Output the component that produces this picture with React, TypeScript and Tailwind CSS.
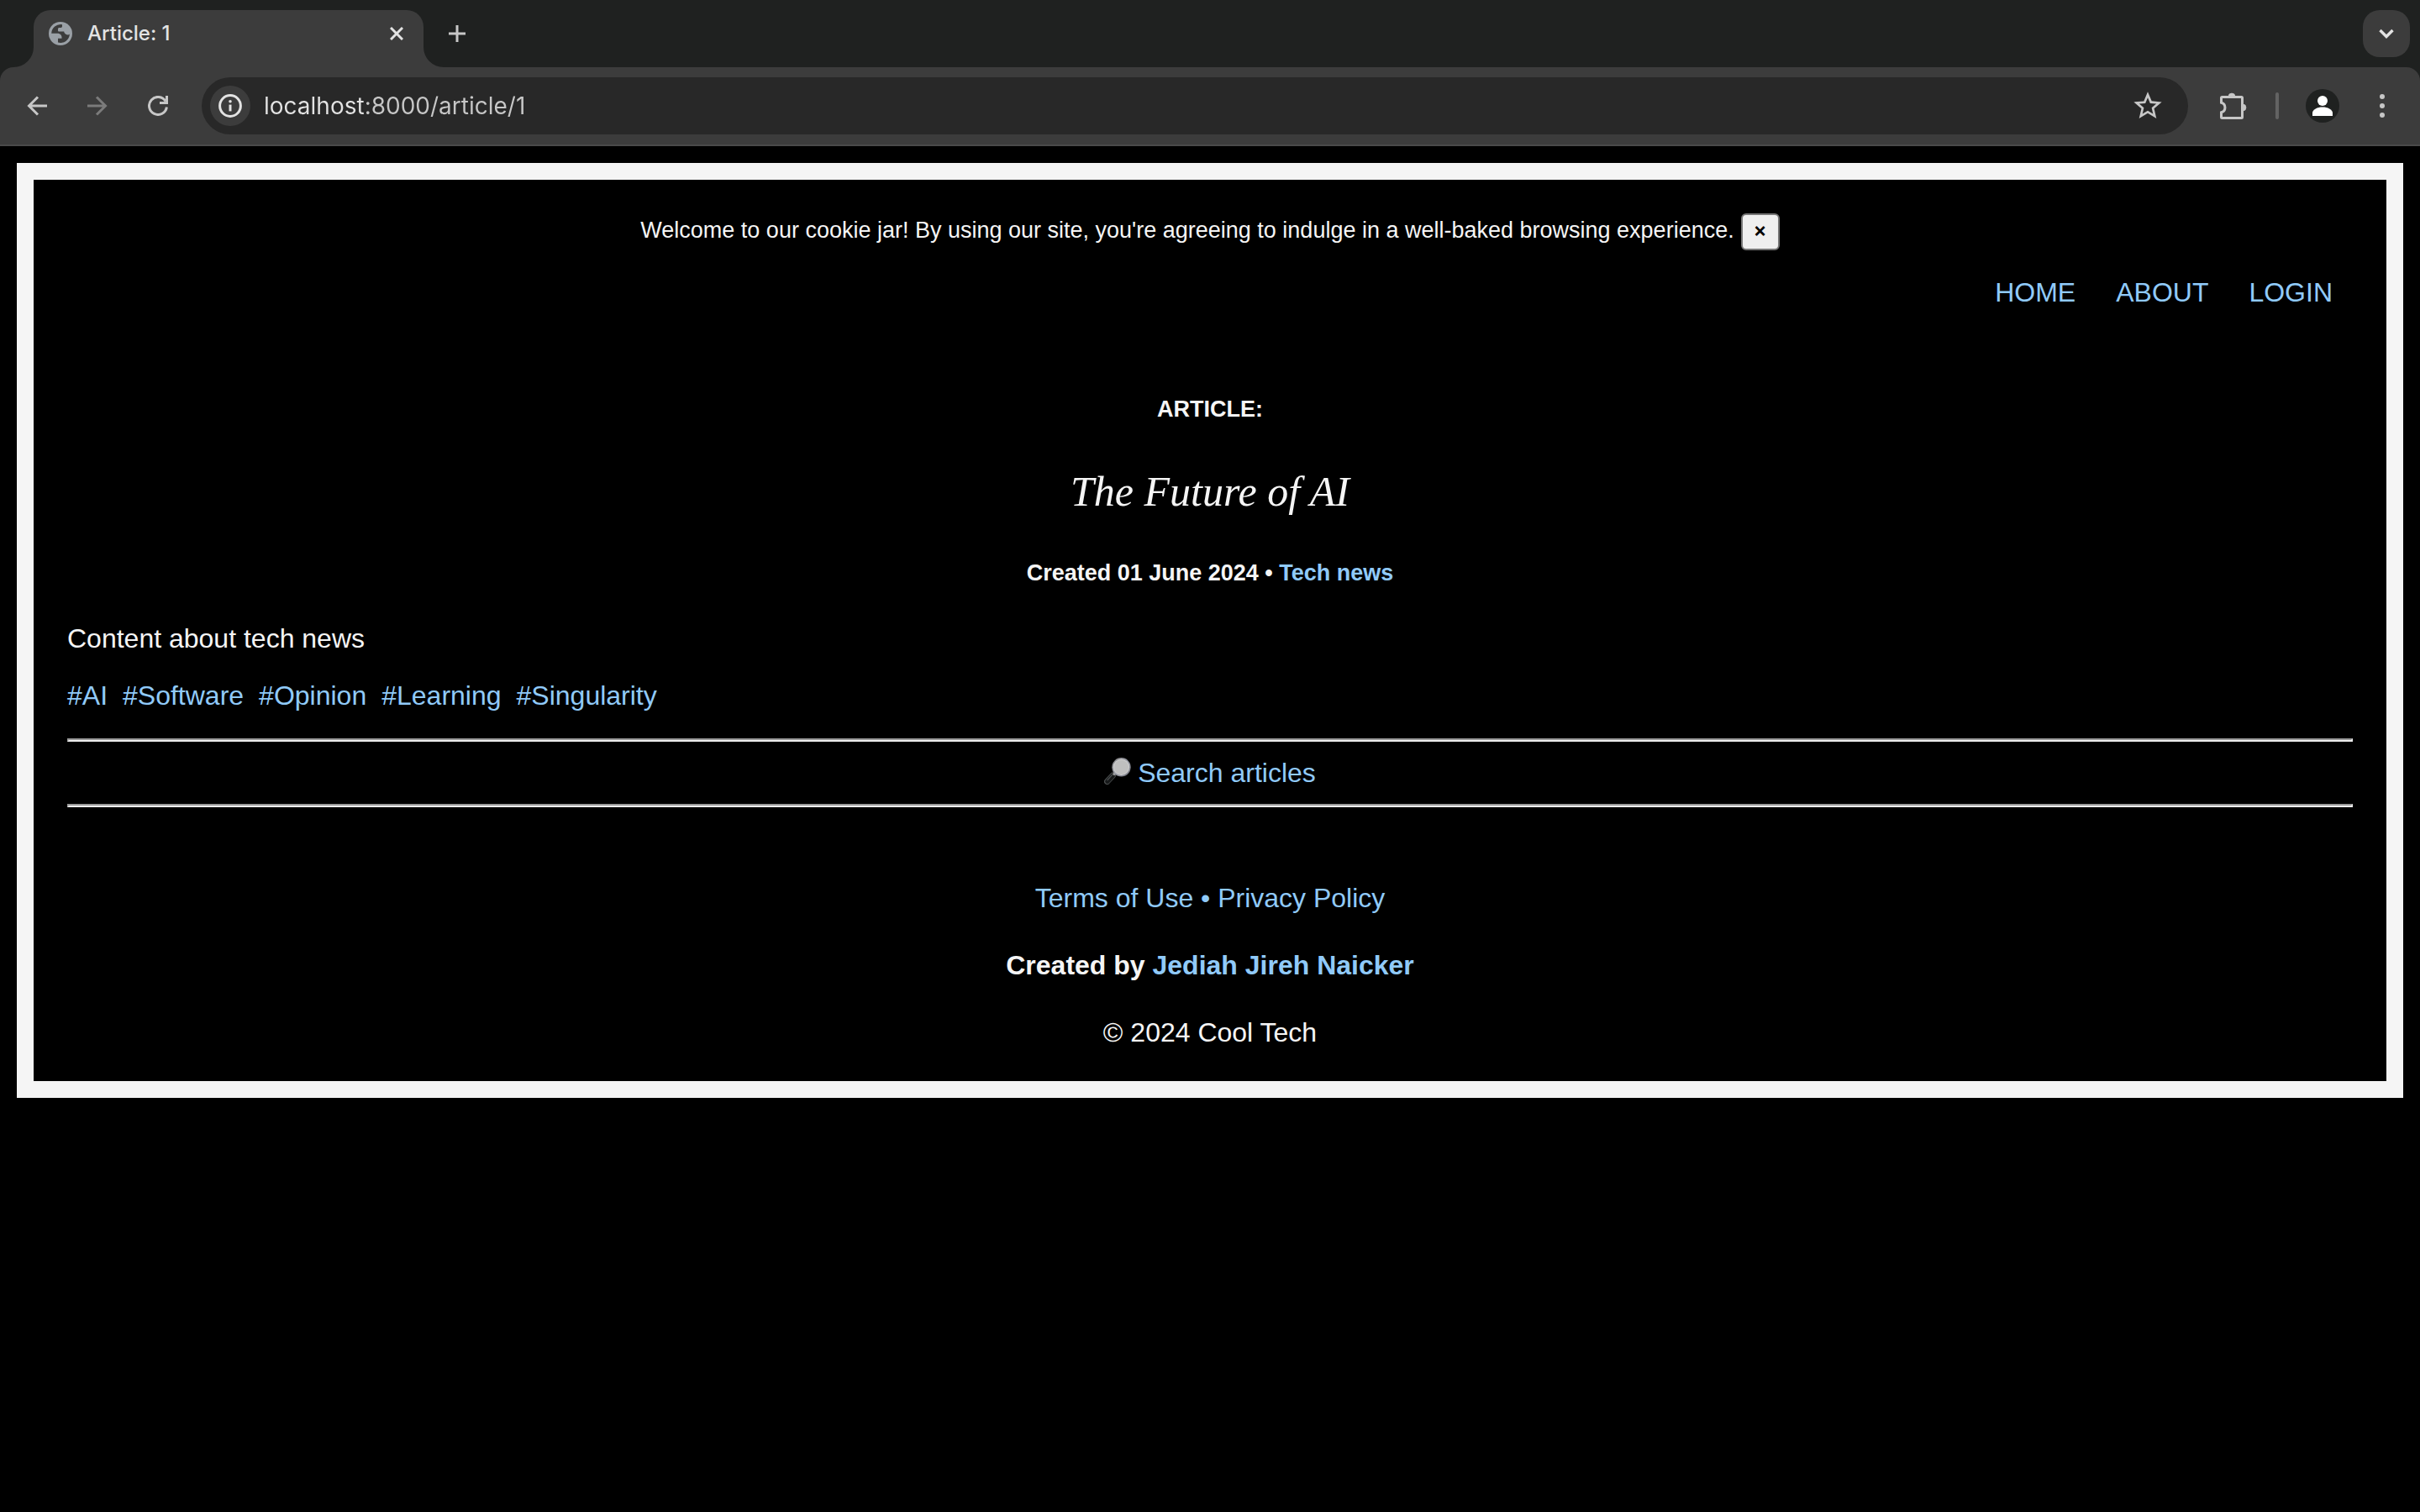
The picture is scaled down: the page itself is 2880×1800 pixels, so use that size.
import type { ReactNode } from "react";

const TAGS = ["#AI", "#Software", "#Opinion", "#Learning", "#Singularity"];
const NAV = ["HOME", "ABOUT", "LOGIN"];

function Link({ children, className = "" }: { children: ReactNode; className?: string }) {
  return (
    <a href="#" className={"text-[#90caf9] " + className}>
      {children}
    </a>
  );
}

function Rule() {
  return <hr className="h-1 border-2 border-t-[#9a9a9a] border-r-[#eeeeee] border-b-[#eeeeee] border-l-[#9a9a9a]" />;
}

function TabStrip() {
  return (
    <div className="flex h-20 items-end bg-[#1f2120] pl-4">
      <svg className="size-6 shrink-0" viewBox="0 0 24 24" fill="#3c3c3c">
        <path d="M24 0V24H0A24 24 0 0 0 24 0Z" />
      </svg>
      <div className="flex h-[68px] w-[464px] items-center rounded-t-[20px] bg-[#3c3c3c] pr-6 pb-3 pl-[18px] text-[#e3e3e3]">
        <svg className="size-7 shrink-0" viewBox="0 0 28 28">
          <circle cx="14" cy="14" r="14" fill="#9aa0a6" />
          <path
            d="M16 3.2A11 11 0 0 0 3.2 13.8H10.5C13.5 13.8 15.5 16 15.5 18.5V19.8H11V24.6A11 11 0 0 0 24.9 14.5C24 15.8 21.5 15.6 20 14.4C18.8 13.6 18.2 12.6 18.2 11.6H12.3C11.5 11.5 11 11 11 10V8.6C11 7.6 11.6 7 12.6 7H14C15.2 7 16 6.2 16 5.2Z"
            fill="#3c3c3c"
          />
        </svg>
        <span className="ml-[18px] flex-1 text-2xl leading-7 font-medium">Article: 1</span>
        <button aria-label="Close tab" className="flex">
          <svg className="size-4" viewBox="0 0 16 16" fill="none" stroke="currentColor" strokeWidth="3">
            <path d="M1 1L15 15M15 1L1 15" />
          </svg>
        </button>
      </div>
      <svg className="size-6 shrink-0" viewBox="0 0 24 24" fill="#3c3c3c">
        <path d="M0 0V24H24A24 24 0 0 1 0 0Z" />
      </svg>
      <button aria-label="New tab" className="mb-[30px] ml-1.5 flex">
        <svg className="size-5" viewBox="0 0 20 20" fill="none" stroke="#c7c7c7" strokeWidth="3">
          <path d="M10 0V20M0 10H20" />
        </svg>
      </button>
      <button
        aria-label="Search tabs"
        className="mr-3 mb-3 ml-auto flex size-14 items-center justify-center rounded-[20px] bg-[#3c3c3c]"
      >
        <svg className="size-5" viewBox="0 0 20 20" fill="none" stroke="#e3e3e3" strokeWidth="3.4">
          <path d="M2.5 6L10 13.5L17.5 6" />
        </svg>
      </button>
    </div>
  );
}

function Toolbar() {
  return (
    <div className="bg-[#1f2120]">
      <div className="flex h-[94px] items-center rounded-t-2xl border-b-2 border-[#4a4a4a] bg-[#3c3c3c] pr-[42px] pl-8">
        <div className="flex gap-12">
          <button aria-label="Back" className="flex">
            <svg className="size-6" viewBox="0 0 24 24" fill="none" stroke="#c7c7c7" strokeWidth="3">
              <path d="M24 12H2.5M13 1.5L2.5 12L13 22.5" />
            </svg>
          </button>
          <button aria-label="Forward" className="flex">
            <svg className="size-6" viewBox="0 0 24 24" fill="none" stroke="#7b7b7b" strokeWidth="3">
              <path d="M0 12H21.5M11 1.5L21.5 12L11 22.5" />
            </svg>
          </button>
          <button aria-label="Reload" className="flex">
            <svg className="size-6" viewBox="0 0 24 24" fill="none" stroke="#c7c7c7" strokeWidth="3">
              <path d="M22.4 13.5A10.5 10.5 0 1 1 21 6.5" />
              <path d="M22.5 0V8.5H14" />
            </svg>
          </button>
        </div>
        <div className="ml-10 flex h-[68px] flex-1 items-center rounded-full bg-[#282828] pr-7 pl-2.5">
          <button
            aria-label="View site information"
            className="flex size-12 items-center justify-center rounded-full bg-[#3c3c3c]"
          >
            <svg className="size-7" viewBox="0 0 28 28" fill="none">
              <circle cx="14" cy="14" r="12.4" stroke="#e3e3e3" strokeWidth="3" />
              <path d="M14 12.6V20.4" stroke="#e3e3e3" strokeWidth="3" />
              <circle cx="14" cy="8.8" r="1.8" fill="#e3e3e3" />
            </svg>
          </button>
          <input
            aria-label="Address"
            readOnly
            value="localhost:8000/article/1"
            className="ml-4 h-9 flex-1 bg-[linear-gradient(90deg,#e3e3e3_121px,#c7c7c7_121px)] bg-clip-text text-[28px] leading-9 text-transparent outline-none"
          />
          <button aria-label="Bookmark this page" className="flex">
            <svg className="size-10" viewBox="0 0 24 24" fill="#c7c7c7">
              <path d="M22 9.24l-7.19-.62L12 2 9.19 8.63 2 9.24l5.46 4.73L5.82 21 12 17.27 18.18 21l-1.63-7.03L22 9.24zM12 15.4l-3.76 2.27 1-4.28-3.32-2.88 4.38-.38L12 6.1l1.71 4.04 4.38.38-3.32 2.88 1 4.28L12 15.4z" />
            </svg>
          </button>
        </div>
        <button aria-label="Extensions" className="ml-9 flex">
          <svg className="size-9" viewBox="0 0 36 36">
            <path
              d="M3.5 13.2V8.5A1 1 0 0 1 4.5 7.5H27.5A1 1 0 0 1 28.5 8.5V31.5A1 1 0 0 1 27.5 32.5H4.5A1 1 0 0 1 3.5 31.5V25.8A6 6 0 0 0 3.5 14.2Z"
              fill="none"
              stroke="#c7c7c7"
              strokeWidth="3"
            />
            <path d="M12 7A4 4 0 0 1 20 7ZM29 16A4 4 0 0 1 29 24Z" fill="#c7c7c7" stroke="#c7c7c7" strokeWidth="0.6" />
          </svg>
        </button>
        <div className="ml-8 h-8 w-1 rounded-full bg-[#636363]" />
        <button aria-label="Profile" className="ml-8 flex">
          <svg className="size-10" viewBox="0 0 40 40" fill="#ffffff">
            <circle cx="20" cy="20" r="20" fill="#1f2120" />
            <circle cx="20" cy="14" r="6" />
            <path d="M8 32V28.6C8 24 14 21.4 20 21.4S32 24 32 28.6V32Z" />
          </svg>
        </button>
        <button aria-label="Menu" className="ml-12 flex">
          <svg className="h-7 w-1.5" viewBox="0 0 6 28" fill="#c7c7c7">
            <circle cx="3" cy="3" r="3" />
            <circle cx="3" cy="14" r="3" />
            <circle cx="3" cy="25" r="3" />
          </svg>
        </button>
      </div>
    </div>
  );
}

function Magnifier() {
  return (
    <svg className="size-8 shrink-0" viewBox="0 0 32 32" aria-hidden="true">
      <defs>
        <linearGradient id="rim" x1="0" y1="0" x2="1" y2="1">
          <stop offset="0" stopColor="#8a8a8a" />
          <stop offset="0.5" stopColor="#9a9ca6" />
          <stop offset="1" stopColor="#6f717a" />
        </linearGradient>
      </defs>
      <path d="M3.5 28.5L10.5 21" stroke="#4a4d4e" strokeWidth="7" strokeLinecap="round" />
      <path d="M4 28.2L10.2 21.4" stroke="#17191a" strokeWidth="5.4" strokeLinecap="round" />
      <path d="M4 26.6L9.6 20.4" stroke="#4b4f50" strokeWidth="1.4" strokeLinecap="round" />
      <path d="M11 20.5L13.5 18" stroke="#9b9b9b" strokeWidth="3" />
      <circle cx="20.5" cy="11.3" r="11.2" fill="url(#rim)" />
      <circle cx="20.5" cy="11.3" r="9.6" fill="#d0d0d0" />
      <circle cx="20.5" cy="11.3" r="8.6" fill="#bfbfbf" />
    </svg>
  );
}

export default function App() {
  return (
    <div className="flex min-h-screen flex-col bg-black">
      <header className="font-['Inter',sans-serif]">
        <TabStrip />
        <Toolbar />
      </header>
      <div className="m-5 border-[20px] border-[#f5f5f5] p-10 font-['Liberation_Sans',Arial,sans-serif] text-[32px] leading-9 text-[#f5f5f5]">
        <div className="flex items-start justify-center gap-2 text-[27px] leading-10">
          <p>Welcome to our cookie jar! By using our site, you're agreeing to indulge in a well-baked browsing experience.</p>
          <button
            aria-label="Dismiss"
            className="flex h-11 w-[46px] items-center justify-center rounded-md border-2 border-[#767676] bg-[#efefef] pb-1 font-['Inter',sans-serif] text-2xl font-semibold text-black"
          >
            ×
          </button>
        </div>
        <nav className="mt-8 flex justify-end">
          {NAV.map((item) => (
            <Link key={item} className="px-6">
              {item}
            </Link>
          ))}
        </nav>
        <main className="mt-[106px]">
          <h4 className="text-center text-[27px] leading-[30px] font-bold">ARTICLE:</h4>
          <h1 className="mt-[53px] text-center font-['Apple_Chancery','Liberation_Serif',serif] text-[50px] leading-[60px] italic">
            The Future of AI
          </h1>
          <h4 className="mt-[52px] text-center text-[27px] leading-[30px] font-bold">
            Created 01 June 2024 • <Link>Tech news</Link>
          </h4>
          <p className="mt-[45px]">Content about tech news</p>
          <div className="mt-8 mb-[33px] flex gap-[18px]">
            {TAGS.map((tag) => (
              <Link key={tag}>{tag}</Link>
            ))}
          </div>
          <Rule />
          <div className="flex justify-center py-[19px]">
            <Link className="flex items-start gap-2">
              <Magnifier />
              Search articles
            </Link>
          </div>
          <Rule />
        </main>
        <footer className="mt-[90px] flex flex-col items-center gap-11">
          <p className="text-[#90caf9]">
            <Link>Terms of Use</Link> • <Link>Privacy Policy</Link>
          </p>
          <p className="font-bold">
            Created by <Link>Jediah Jireh Naicker</Link>
          </p>
          <p>© 2024 Cool Tech</p>
        </footer>
      </div>
    </div>
  );
}
